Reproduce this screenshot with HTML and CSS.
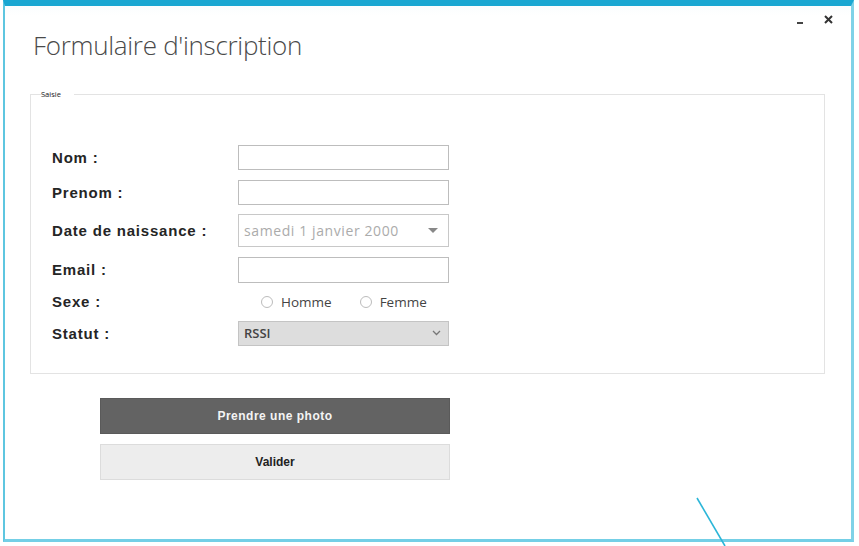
FILE: index.html
```html
<!DOCTYPE html>
<html lang="fr">
<head>
<meta charset="utf-8">
<title>Formulaire d'inscription</title>
<link rel="stylesheet" href="styles.css">
</head>
<body>
<div class="window">
  <div class="titlebar">
    <h1 class="title">Formulaire d'inscription</h1>
    <div class="controls">
      <span class="ctl-min"></span>
      <svg class="ctl-close" width="9" height="9" viewBox="0 0 9 9"><path d="M1 1L8 8M8 1L1 8" stroke="#333" stroke-width="2"/></svg>
    </div>
  </div>

  <fieldset class="group">
    <legend class="group-label">Saisie</legend>
    <div class="form">
      <label class="lbl">Nom :</label>
      <div class="field text"></div>

      <label class="lbl">Prenom :</label>
      <div class="field text"></div>

      <label class="lbl">Date de naissance :</label>
      <div class="field date">
        <span class="date-val">samedi 1 janvier 2000</span>
        <svg width="10" height="6" viewBox="0 0 10 6"><path d="M0 0H10L5 5Z" fill="#888"/></svg>
      </div>

      <label class="lbl">Email :</label>
      <div class="field text"></div>

      <label class="lbl">Sexe :</label>
      <div class="radios">
        <span class="radio"><span class="dot"></span>Homme</span>
        <span class="radio"><span class="dot"></span>Femme</span>
      </div>

      <label class="lbl">Statut :</label>
      <div class="field select">
        <span class="sel-val">RSSI</span>
        <svg width="9" height="6" viewBox="0 0 9 6"><path d="M1 1L4.5 4.5L8 1" stroke="#777" stroke-width="1.3" fill="none"/></svg>
      </div>
    </div>
  </fieldset>

  <div class="actions">
    <button class="btn btn-dark">Prendre une photo</button>
    <button class="btn btn-light">Valider</button>
  </div>
</div>
<svg class="pointer-line" width="40" height="60" viewBox="0 0 40 60"><path d="M2 2L30 50" stroke="#2cb6d8" stroke-width="1.6"/></svg>
</body>
</html>
```

FILE: styles.css
```css
html, body {
  margin: 0;
  padding: 0;
  background: #ffffff;
}
body {
  position: relative;
  width: 859px;
  height: 546px;
  overflow: hidden;
  font-family: "Liberation Sans", Arial, sans-serif;
}
.window {
  margin-left: 3px;
  width: 851px;
  height: 542px;
  box-sizing: border-box;
  border-top: 6px solid #1aa7d2;
  border-left: 2px solid #5ec6e0;
  border-right: 3px solid #7fd2e7;
  border-bottom: 3px solid #74cfe6;
  background: #fff;
}
.titlebar {
  display: flex;
  justify-content: space-between;
  align-items: flex-start;
  padding: 0 18px 0 28px;
  height: 83px;
  background: linear-gradient(#fbfdfe, #fff 10px);
}
.title {
  margin: 22px 0 0;
  font-family: "Open Sans", "Noto Sans", sans-serif;
  font-weight: 300;
  font-size: 26px;
  line-height: 34px;
  color: #4a4a4a;
  letter-spacing: -0.3px;
}
.controls {
  display: flex;
  align-items: flex-end;
  gap: 21px;
  margin-top: 9px;
}
.ctl-min {
  width: 6px;
  height: 2px;
  background: #444;
  margin-bottom: 0;
}
.ctl-close {
  display: block;
}
.group {
  margin: 0 0 0 25px;
  width: 795px;
  height: 285px;
  box-sizing: border-box;
  border: 1px solid #e3e3e3;
  padding: 46px 0 0 21px;
  min-width: 0;
}
.group-label {
  margin-left: 0;
  padding: 0 1px;
  font-family: "Open Sans", "Noto Sans", sans-serif;
  font-size: 7.5px;
  color: #222;
  line-height: 10px;
  position: relative;
  left: -12px;
}
.form {
  display: grid;
  grid-template-columns: 186px 211px;
  grid-template-rows: 25px 25px 33px 26px 19px 25px;
  row-gap: 9.6px;
  align-items: center;
}
.lbl {
  font-weight: bold;
  font-size: 15px;
  letter-spacing: 0.8px;
  color: #252525;
  align-self: center;
}
.field {
  height: 100%;
  box-sizing: border-box;
  border: 1px solid #bdbdbd;
  background: #fff;
}
.date {
  display: flex;
  align-items: center;
  justify-content: space-between;
  padding: 0 10px 0 5px;
  border-color: #c8c8c8;
}
.date-val {
  font-family: "Open Sans", "Noto Sans", sans-serif;
  font-size: 14px;
  letter-spacing: 0.6px;
  color: #ababab;
}
.radios {
  display: flex;
  align-items: center;
  gap: 28px;
  padding-left: 23px;
}
.radio {
  display: flex;
  align-items: center;
  gap: 8px;
  font-family: "Open Sans", "Noto Sans", sans-serif;
  font-size: 13.5px;
  color: #444;
}
.dot {
  width: 12px;
  height: 12px;
  box-sizing: border-box;
  border: 1px solid #bcbcbc;
  border-radius: 50%;
  background: #fff;
}
.select {
  display: flex;
  align-items: center;
  justify-content: space-between;
  padding: 0 7px 0 5px;
  background: #dddddd;
  border-color: #c4c4c4;
}
.sel-val {
  font-family: "Open Sans", "Noto Sans", sans-serif;
  font-size: 13px;
  color: #444;
  font-weight: 600;
}
.actions {
  display: flex;
  flex-direction: column;
  gap: 10px;
  width: 350px;
  margin: 24px 0 0 95px;
}
.btn {
  height: 36px;
  box-sizing: border-box;
  font-family: "Liberation Sans", Arial, sans-serif;
  font-weight: bold;
  font-size: 12px;
  cursor: pointer;
}
.btn-dark {
  background: #636363;
  color: #f4f4f4;
  border: 1px solid #5a5a5a;
  letter-spacing: 0.5px;
}
.btn-light {
  background: #ededed;
  color: #222;
  border: 1px solid #dcdcdc;
}
.pointer-line {
  position: absolute;
  left: 695px;
  top: 496px;
}
```
